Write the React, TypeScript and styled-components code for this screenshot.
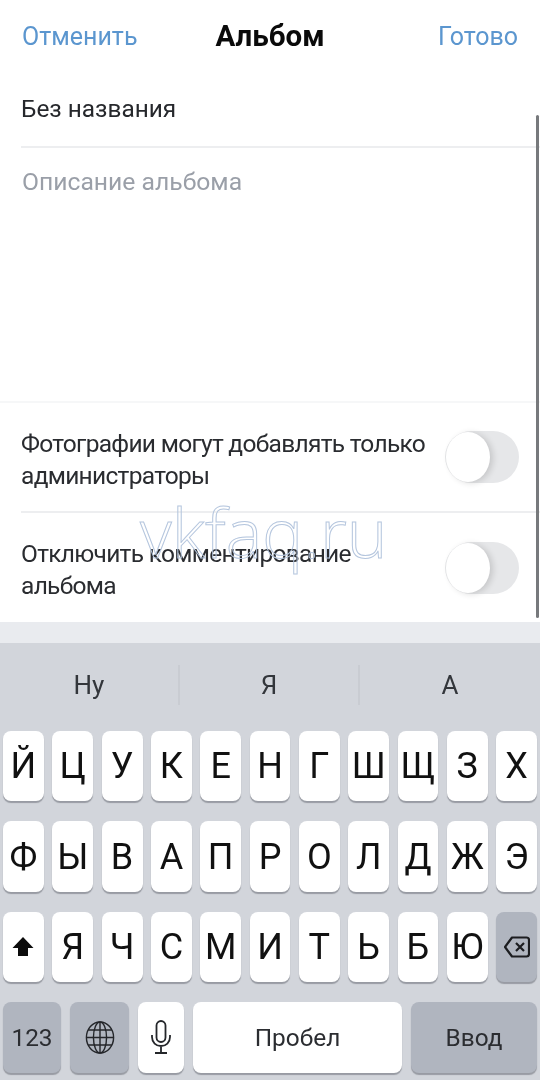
import React from "react";
import styled, { createGlobalStyle } from "styled-components";

const GlobalStyle = createGlobalStyle`
  html, body {
    margin: 0;
    padding: 0;
    background: #fff;
  }
  body {
    font-family: Roboto, "Liberation Sans", sans-serif;
  }
`;

const Screen = styled.div`
  position: relative;
  width: 540px;
  height: 1080px;
  overflow: hidden;
  display: flex;
  flex-direction: column;
  background: #fff;
`;

const Form = styled.div`
  height: 622px;
  display: flex;
  flex-direction: column;
  filter: blur(0.6px);
`;

const Header = styled.header`
  height: 72px;
  padding: 0 22px;
  display: grid;
  grid-template-columns: 1fr auto 1fr;
  align-items: center;
  font-size: 25px;
`;

const HeaderAction = styled.span<{ $end?: boolean }>`
  color: #5b96cf;
  text-align: ${(p) => (p.$end ? "right" : "left")};
`;

const Title = styled.h1`
  margin: 0;
  font-size: 29.5px;
  font-weight: 700;
  color: #0a0a0a;
`;

const NameField = styled.div`
  height: 76px;
  margin-left: 21px;
  padding-bottom: 2px;
  display: flex;
  align-items: center;
  font-size: 24.4px;
  color: #26282c;
  border-bottom: 2px solid #edeef0;
  box-sizing: border-box;
`;

const DescriptionField = styled.div`
  height: 255px;
  padding: 19px 22px 0;
  box-sizing: border-box;
  font-size: 24.7px;
  line-height: 30px;
  color: #9a9fa8;
  border-bottom: 2px solid #f6f7f8;
`;

const ToggleRow = styled.div<{ $last?: boolean }>`
  height: ${(p) => (p.$last ? 109 : 110)}px;
  margin-left: 21px;
  padding-right: 21px;
  box-sizing: border-box;
  display: flex;
  align-items: center;
  justify-content: space-between;
  border-bottom: ${(p) => (p.$last ? "none" : "2px solid #edeef0")};
`;

const ToggleLabel = styled.div`
  width: 418px;
  margin-top: 5px;
  font-size: 24.5px;
  letter-spacing: -0.7px;
  line-height: 32px;
  color: #2a2c30;
`;

const Toggle = styled.div`
  width: 74px;
  height: 52px;
  border-radius: 26px;
  background: #e6e7e9;
  flex: none;
  display: flex;
`;

const ToggleKnob = styled.div`
  width: 44px;
  height: 50px;
  margin: 1px;
  border-radius: 50%;
  background: #fff;
  box-shadow: 3px 1px 6px rgba(0, 0, 0, 0.14);
`;

const AccessoryStrip = styled.div`
  height: 21px;
  background: #e9ebef;
`;

const Keyboard = styled.div`
  flex: 1;
  display: flex;
  flex-direction: column;
  background: #d2d5db;
  filter: blur(0.5px);
`;

const Suggestions = styled.div`
  height: 88px;
  display: grid;
  grid-template-columns: repeat(3, 1fr);
  align-items: center;
`;

const Suggestion = styled.div<{ $divider?: boolean }>`
  height: 40px;
  margin-top: -4px;
  display: flex;
  align-items: center;
  justify-content: center;
  font-size: 26px;
  color: #33363b;
  border-right: ${(p) => (p.$divider ? "2px solid #c9ccd2" : "none")};
`;

const Rows = styled.div`
  display: flex;
  flex-direction: column;
  gap: 20px;
  padding: 0 3px;
`;

const KeyRow = styled.div<{ $gap?: number }>`
  height: 70.4px;
  display: flex;
  gap: ${(p) => p.$gap ?? 8.4}px;
`;

const Key = styled.div<{ $grey?: boolean; $width?: number; $small?: boolean }>`
  flex: ${(p) => (p.$width ? `0 0 ${p.$width}px` : "1 1 0")};
  display: flex;
  align-items: center;
  justify-content: center;
  border-radius: 8px;
  background: ${(p) => (p.$grey ? "#b0b5bf" : "#fff")};
  box-shadow: 0 2px 1px #989ba3;
  color: ${(p) => (p.$small ? "#2b2d31" : "#111")};
  font-size: ${(p) => (p.$small ? 24.4 : 36)}px;
  font-weight: 400;
`;

const Scrollbar = styled.div`
  position: absolute;
  left: 536px;
  top: 115px;
  width: 3px;
  height: 503px;
  border-radius: 2px;
  background: #77797c;
`;

const Watermark = styled.div`
  position: absolute;
  left: 140px;
  top: 487px;
  font-family: "Open Sans", sans-serif;
  font-size: 69px;
  font-weight: 300;
  line-height: 88px;
  color: transparent;
  -webkit-text-stroke: 1px #b5c6de;
`;

const ShiftIcon = () => (
  <svg width="22" height="22" viewBox="0 0 22 22">
    <path d="M11 1 L21.5 12 H16 V20 H6 V12 H0.5 Z" fill="#0c0c0c" />
  </svg>
);

const GlobeIcon = () => (
  <svg width="30" height="35" viewBox="0 0 32 36" fill="none" stroke="#24262a" strokeWidth="1.5">
    <ellipse cx="16" cy="18" rx="14.5" ry="16.5" />
    <ellipse cx="16" cy="18" rx="7" ry="16.5" />
    <path d="M16 1.5 V34.5 M1.5 18 H30.5 M3.5 10 H28.5 M3.5 26 H28.5" />
  </svg>
);

const MicIcon = () => (
  <svg width="20" height="34" viewBox="0 0 20 34" fill="none" stroke="#24262a" strokeWidth="1.8">
    <rect x="5.5" y="1" width="9" height="21" rx="4.5" />
    <path d="M1 15 V17 C1 22.5 5 26 10 26 C15 26 19 22.5 19 17 V15 M10 26 V32 M4 33 H16" />
  </svg>
);

const DeleteIcon = () => (
  <svg width="26" height="22" viewBox="0 0 26 22" fill="none" stroke="#1c1d20" strokeWidth="2.2" strokeLinejoin="round">
    <path d="M8 1.5 H22.5 A2.5 2.5 0 0 1 25 4 V18 A2.5 2.5 0 0 1 22.5 20.5 H8 L1 11 Z" />
    <path d="M12 7 L20 15 M20 7 L12 15" />
  </svg>
);

const topRow = ["Й", "Ц", "У", "К", "Е", "Н", "Г", "Ш", "Щ", "З", "Х"];
const midRow = ["Ф", "Ы", "В", "А", "П", "Р", "О", "Л", "Д", "Ж", "Э"];
const lowRow = ["Я", "Ч", "С", "М", "И", "Т", "Ь", "Б", "Ю"];

export default function App() {
  return (
    <Screen>
      <GlobalStyle />
      <Form>
        <Header>
          <HeaderAction>Отменить</HeaderAction>
          <Title>Альбом</Title>
          <HeaderAction $end>Готово</HeaderAction>
        </Header>
        <NameField>Без названия</NameField>
        <DescriptionField>Описание альбома</DescriptionField>
        <ToggleRow>
          <ToggleLabel>Фотографии могут добавлять только администраторы</ToggleLabel>
          <Toggle>
            <ToggleKnob />
          </Toggle>
        </ToggleRow>
        <ToggleRow $last>
          <ToggleLabel>Отключить комментирование альбома</ToggleLabel>
          <Toggle>
            <ToggleKnob />
          </Toggle>
        </ToggleRow>
      </Form>
      <AccessoryStrip />
      <Keyboard>
        <Suggestions>
          <Suggestion $divider>Ну</Suggestion>
          <Suggestion $divider>Я</Suggestion>
          <Suggestion>А</Suggestion>
        </Suggestions>
        <Rows>
          <KeyRow>
            {topRow.map((k) => (
              <Key key={k}>{k}</Key>
            ))}
          </KeyRow>
          <KeyRow>
            {midRow.map((k) => (
              <Key key={k}>{k}</Key>
            ))}
          </KeyRow>
          <KeyRow>
            <Key>
              <ShiftIcon />
            </Key>
            {lowRow.map((k) => (
              <Key key={k}>{k}</Key>
            ))}
            <Key $grey>
              <DeleteIcon />
            </Key>
          </KeyRow>
          <KeyRow $gap={9}>
            <Key $grey $small $width={58}>123</Key>
            <Key $grey $width={59}>
              <GlobeIcon />
            </Key>
            <Key $width={46}>
              <MicIcon />
            </Key>
            <Key $small $width={209}>Пробел</Key>
            <Key $grey $small $width={126}>Ввод</Key>
          </KeyRow>
        </Rows>
      </Keyboard>
      <Scrollbar />
      <Watermark>vkfaq.ru</Watermark>
    </Screen>
  );
}
